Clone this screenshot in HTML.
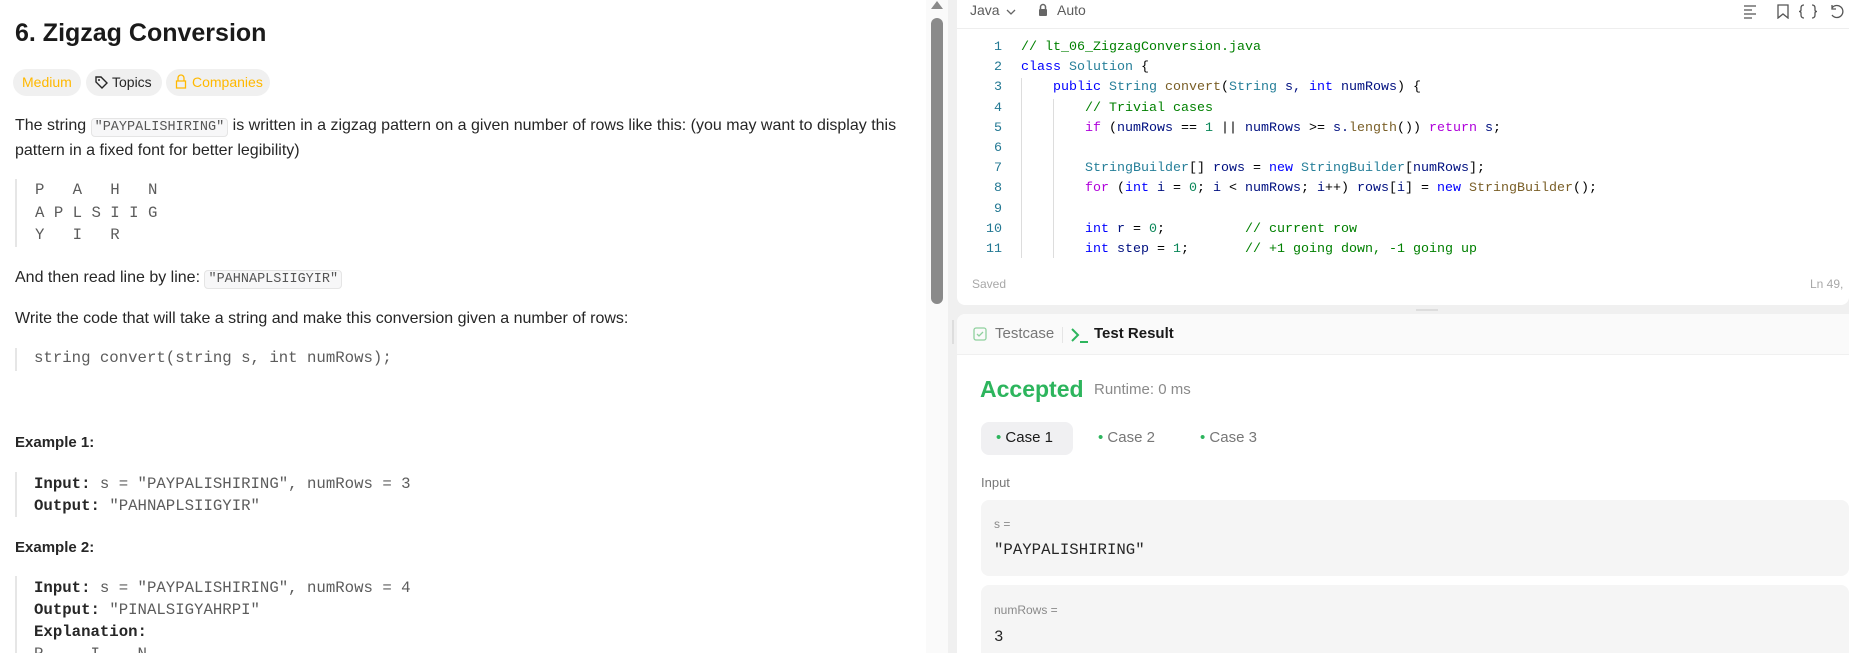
<!DOCTYPE html>
<html style="overflow:hidden"><head><meta charset="utf-8"><style>
*{margin:0;padding:0;box-sizing:border-box}
html,body{overflow:hidden}
body{width:1849px;height:653px;background:#f0f0f0;font-family:"Liberation Sans",sans-serif;color:#262626;position:relative}
.a{position:absolute;white-space:pre}
#left{position:absolute;left:0;top:0;width:930px;height:653px;background:#fff;overflow:hidden}
.t{font-size:16px;color:#262626}
.m{font-family:"Liberation Mono",monospace}
.code{background:#f7f7f8;border:1px solid #e5e5e5;border-radius:4px;font-family:"Liberation Mono",monospace;font-size:13.5px;color:#555;padding:1px 3px}
.tag{position:absolute;top:69px;height:27px;border-radius:14px;background:#f0f0f0;font-size:14px;line-height:27px;padding:0 9px}
.bl{position:absolute;left:15px;width:2px;background:#e6e6e6}
.pre{font-family:"Liberation Mono",monospace;font-size:15.7px;color:#5c5c5c}
.ed{font-family:"Liberation Mono",monospace;font-size:13.33px;color:#001080}
.ln{position:absolute;white-space:pre;width:30px;text-align:right;left:972px;font-family:"Liberation Mono",monospace;font-size:13.33px;color:#237893}
.c{color:#008000}.k{color:#0000ff}.ty{color:#267f99}.f{color:#795e26}.n{color:#098658}.p{color:#af00db}.d{color:#000}
</style></head><body>
<div id="left">
<div class="a" style="left:15px;top:19px;font-size:25px;font-weight:600;color:#1a1a1a">6. Zigzag Conversion</div>
<div class="tag" style="left:13px;color:#ffb800">Medium</div>
<div class="tag" style="left:86px;width:76px;padding-left:26px;color:#262626">Topics</div>
<svg class="a" style="left:94px;top:75px" width="14" height="15" viewBox="0 0 14 15"><path d="M2 2h5l6 6-5 5-6-6z" fill="none" stroke="#262626" stroke-width="1.4"/><circle cx="5" cy="5" r="1" fill="#262626"/></svg>
<div class="tag" style="left:166px;width:104px;padding-left:26px;color:#ffb800">Companies</div>
<svg class="a" style="left:175px;top:74px" width="12" height="16" viewBox="0 0 12 16"><path d="M3 7V4a3 3 0 0 1 6 0v3M1.5 7h9v7h-9z" fill="none" stroke="#ffb800" stroke-width="1.3"/></svg>
<div class="a t" style="left:15px;top:117px">The string <span class="code">"PAYPALISHIRING"</span> is written in a zigzag pattern on a given number of rows like this: (you may want to display this</div>
<div class="a t" style="left:15px;top:142px">pattern in a fixed font for better legibility)</div>
<div class="bl" style="top:179px;height:68px"></div>
<div class="a pre" style="left:35px;top:179px;line-height:22.5px">P   A   H   N
A P L S I I G
Y   I   R</div>
<div class="a t" style="left:15px;top:269px">And then read line by line: <span class="code">"PAHNAPLSIIGYIR"</span></div>
<div class="a t" style="left:15px;top:310px">Write the code that will take a string and make this conversion given a number of rows:</div>
<div class="bl" style="top:348px;height:23px"></div>
<div class="a pre" style="left:34px;top:349px">string convert(string s, int numRows);</div>
<div class="a" style="left:15px;top:434px;font-size:15px;font-weight:700">Example 1:</div>
<div class="bl" style="top:472px;height:45px"></div>
<div class="a pre" style="left:34px;top:473px;line-height:22px"><b style="color:#262626">Input:</b> s = "PAYPALISHIRING", numRows = 3
<b style="color:#262626">Output:</b> "PAHNAPLSIIGYIR"</div>
<div class="a" style="left:15px;top:539px;font-size:15px;font-weight:700">Example 2:</div>
<div class="bl" style="top:576px;height:80px"></div>
<div class="a pre" style="left:34px;top:577px;line-height:22px"><b style="color:#262626">Input:</b> s = "PAYPALISHIRING", numRows = 4
<b style="color:#262626">Output:</b> "PINALSIGYAHRPI"
<b style="color:#262626">Explanation:</b>
P     I    N</div>
</div>
<div class="a" style="left:926px;top:0;width:22px;height:653px;background:#fafafa"></div>
<div class="a" style="left:931px;top:18px;width:12px;height:286px;background:#8a8a8a;border-radius:6px"></div>
<svg class="a" style="left:930px;top:0" width="14" height="10"><path d="M7 1L13 9H1z" fill="#8a8a8a"/></svg>
<div class="a" style="left:957px;top:0;width:892px;height:305px;background:#fff;border-radius:0 0 8px 8px"></div>
<div class="a" style="left:957px;top:28px;width:892px;height:1px;background:#eee"></div>
<div class="a" style="left:970px;top:2px;font-size:14px;color:#5c5c5c">Java</div>
<svg class="a" style="left:1005px;top:6px" width="12" height="12"><path d="M2 4l4 4 4-4" fill="none" stroke="#666" stroke-width="1.3"/></svg>
<svg class="a" style="left:1037px;top:3px" width="12" height="14"><path d="M3.5 6V4a2.5 2.5 0 0 1 5 0v2" fill="none" stroke="#666" stroke-width="1.5"/><rect x="2" y="6" width="8" height="7" rx="1" fill="#666"/></svg>
<div class="a" style="left:1057px;top:2px;font-size:14px;color:#5c5c5c">Auto</div>
<svg class="a" style="left:1740px;top:3px" width="109" height="16"><g fill="none" stroke="#555" stroke-width="1.3"><path d="M4 3h12M4 7h8M4 11h12M4 15h8"/><path d="M38 2h10v13l-5-4-5 4z"/><path d="M64 2q-3 0-3 3v2q0 1.5-2 1.5q2 0 2 1.5v2q0 3 3 3M72 2q3 0 3 3v2q0 1.5 2 1.5q-2 0-2 1.5v2q0 3-3 3"/><path d="M92 5a6 6 0 1 1 0 7M92 2v4h4"/></g></svg>
<div class="ln" style="top:38px;line-height:20.2px;height:220px;overflow:hidden">1
2
3
4
5
6
7
8
9
10
11</div>
<div class="a" style="left:1021px;top:78px;width:1px;height:180px;background:#ddd"></div>
<div class="a" style="left:1053px;top:99px;width:1px;height:159px;background:#ddd"></div>
<div class="a ed" style="left:1021px;top:38px;line-height:20.2px;height:220px;overflow:hidden"><span class="c">// lt_06_ZigzagConversion.java</span>
<span class="k">class</span> <span class="ty">Solution</span> <span class="d">{</span>
    <span class="k">public</span> <span class="ty">String</span> <span class="f">convert</span><span class="d">(</span><span class="ty">String</span> s, <span class="k">int</span> numRows<span class="d">) {</span>
        <span class="c">// Trivial cases</span>
        <span class="p">if</span> <span class="d">(</span>numRows <span class="d">==</span> <span class="n">1</span> <span class="d">||</span> numRows <span class="d">&gt;=</span> s.<span class="f">length</span><span class="d">())</span> <span class="p">return</span> s<span class="d">;</span>

        <span class="ty">StringBuilder</span><span class="d">[]</span> rows <span class="d">=</span> <span class="k">new</span> <span class="ty">StringBuilder</span><span class="d">[</span>numRows<span class="d">];</span>
        <span class="p">for</span> <span class="d">(</span><span class="k">int</span> i <span class="d">=</span> <span class="n">0</span><span class="d">;</span> i <span class="d">&lt;</span> numRows<span class="d">;</span> i<span class="d">++)</span> rows<span class="d">[</span>i<span class="d">] =</span> <span class="k">new</span> <span class="f">StringBuilder</span><span class="d">();</span>

        <span class="k">int</span> r <span class="d">=</span> <span class="n">0</span><span class="d">;</span>          <span class="c">// current row</span>
        <span class="k">int</span> step <span class="d">=</span> <span class="n">1</span><span class="d">;</span>       <span class="c">// +1 going down, -1 going up</span></div>
<div class="a" style="left:972px;top:277px;font-size:12px;color:#a8a8a8">Saved</div>
<div class="a" style="left:1810px;top:277px;font-size:12px;color:#a8a8a8">Ln 49,</div>
<div class="a" style="left:1416px;top:309px;width:22px;height:2px;background:#ddd"></div>
<div style="position:absolute;left:957px;top:314px;width:892px;height:339px;background:#fff;border-radius:8px 0 0 0;overflow:hidden"><div style="height:41px;background:#fafafa;border-bottom:1px solid #f0f0f0"></div></div>
<div class="a" style="left:952px;top:320px;width:2px;height:24px;background:#ddd"></div>
<svg class="a" style="left:973px;top:327px" width="14" height="14"><rect x="1" y="1" width="12" height="12" rx="2" fill="none" stroke="#8fd19e" stroke-width="1.3"/><path d="M4 7l2 2 4-4" fill="none" stroke="#8fd19e" stroke-width="1.3"/></svg>
<div class="a" style="left:995px;top:325px;font-size:15px;color:#777">Testcase</div>
<div class="a" style="left:1062px;top:327px;width:1px;height:16px;background:#e5e5e5"></div>
<svg class="a" style="left:1070px;top:326px" width="20" height="18"><path d="M2 3l6 6-6 6" fill="none" stroke="#2db55d" stroke-width="2"/><path d="M10 16h8" stroke="#2db55d" stroke-width="2"/></svg>
<div class="a" style="left:1094px;top:325px;font-size:15px;font-weight:700;color:#1a1a1a">Test Result</div>
<div class="a" style="left:980px;top:376px;font-size:23px;font-weight:600;color:#2db55d">Accepted</div>
<div class="a" style="left:1094px;top:381px;font-size:15px;color:#8a8a8a">Runtime: 0 ms</div>
<div class="a" style="left:981px;top:422px;width:92px;height:33px;background:#f0f0f2;border-radius:8px"></div>
<div class="a" style="left:996px;top:429px;font-size:15px;color:#1a1a1a"><span style="color:#2db55d">•</span> Case 1</div>
<div class="a" style="left:1098px;top:429px;font-size:15px;color:#777"><span style="color:#2db55d">•</span> Case 2</div>
<div class="a" style="left:1200px;top:429px;font-size:15px;color:#777"><span style="color:#2db55d">•</span> Case 3</div>
<div class="a" style="left:981px;top:475px;font-size:13px;color:#777">Input</div>
<div class="a" style="left:981px;top:500px;width:868px;height:76px;background:#f5f5f5;border-radius:8px"></div>
<div class="a" style="left:994px;top:517px;font-size:12px;color:#8a8a8a">s =</div>
<div class="a m" style="left:994px;top:541px;font-size:15.7px;color:#262626">"PAYPALISHIRING"</div>
<div class="a" style="left:981px;top:585px;width:868px;height:80px;background:#f5f5f5;border-radius:8px"></div>
<div class="a" style="left:994px;top:603px;font-size:12px;color:#8a8a8a">numRows =</div>
<div class="a m" style="left:994px;top:628px;font-size:15.7px;color:#262626">3</div>
</body></html>
